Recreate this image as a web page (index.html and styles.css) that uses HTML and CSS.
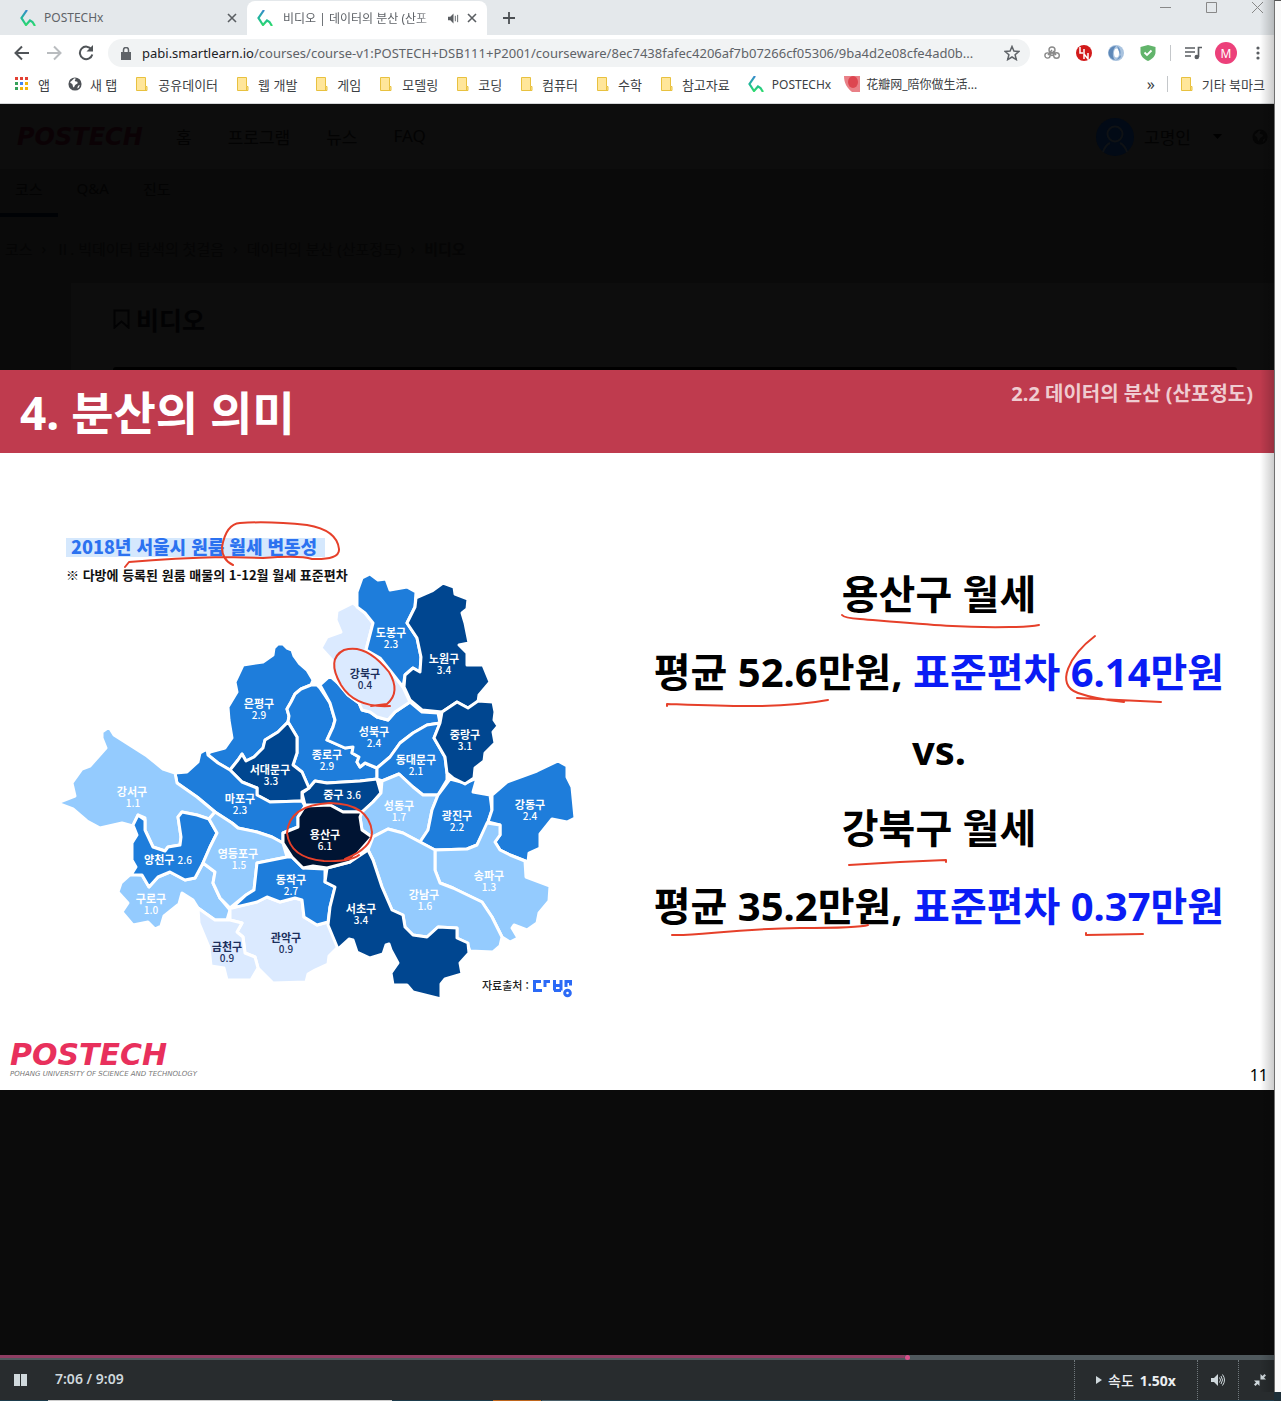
FILE: index.html
```html
<!DOCTYPE html>
<html lang="ko">
<head>
<meta charset="utf-8">
<meta name="viewport" content="width=device-width, initial-scale=1">
<title>비디오 | 데이터의 분산 (산포정도)</title>
<link rel="stylesheet" href="styles.css">
</head>
<body>
<svg class="defs" width="0" height="0" aria-hidden="true">
  <defs>
    <linearGradient id="mark-fill" x1="0" y1="0" x2="0" y2="1">
      <stop offset="0" stop-color="#3a86cf"/><stop offset=".5" stop-color="#1fb89a"/><stop offset="1" stop-color="#2fdc6a"/>
    </linearGradient>
    <symbol id="mark" viewBox="0 0 16 16"><path d="M7 0 1.500 8 6 15 10 10.500 12.500 12 15 16" fill="none" stroke="url(#mark-fill)" stroke-width="2.200"/></symbol>
    <symbol id="folder" viewBox="0 0 14 14"><path d="M1.500.500h9v9h1.500v4h-10.500z" fill="#ffe69a" stroke="#e8c13f"/><path d="M10.500 9.500v4" stroke="#e8c13f"/></symbol>
    <symbol id="close" viewBox="0 0 10 10"><path d="m1 1 8 8M9 1 1 9" stroke="#5a5e62" stroke-width="1.600"/></symbol>
    <symbol id="globe" viewBox="0 0 16 16"><circle cx="8" cy="8" r="7.500" fill="currentColor"/><path d="M8 1.500c2 1-1 2 0 3s3 0 3 2-2 1-3 3-1 3-2 2 0-3-2-4-2-2 0-3 2-3 4-3zM11.500 10l2-1-1 3-2 1z" fill="var(--globe-land)"/></symbol>
  </defs>
</svg>

<div class="desktop">
  <main class="window">
    <div class="tabs">
      <div class="tab">
        <svg class="icon16"><use href="#mark"/></svg>
        <span class="tab-title">POSTECHx</span>
        <button class="plain" aria-label="탭 닫기"><svg class="icon10"><use href="#close"/></svg></button>
      </div>
      <div class="tab active">
        <svg class="icon16"><use href="#mark"/></svg>
        <span class="tab-title fade">비디오 | 데이터의 분산 (산포</span>
        <svg class="speaker" width="11" height="11" viewBox="0 0 12 12"><path d="M0 4h2.500l3.500-3.500v11L2.500 8H0z" fill="#5a5e62"/><path d="M8 3v6M10.500 2v8" stroke="#5a5e62" fill="none"/></svg>
        <button class="plain" aria-label="탭 닫기"><svg class="icon10"><use href="#close"/></svg></button>
      </div>
      <button class="plain new-tab" aria-label="새 탭"><svg width="12" height="12" viewBox="0 0 12 12"><path d="M6 0v12M0 6h12" stroke="#4b4f53" stroke-width="1.800"/></svg></button>
      <div class="window-buttons">
        <button class="plain" aria-label="최소화"><svg width="11" height="11"><path d="M0 5.500h11" stroke="#888"/></svg></button>
        <button class="plain" aria-label="최대화"><svg width="11" height="11"><path d="M.500.500h10v10H.500z" fill="none" stroke="#888"/></svg></button>
        <button class="plain" aria-label="닫기"><svg width="11" height="11"><path d="m0 0 11 11M11 0 0 11" stroke="#888"/></svg></button>
      </div>
    </div>

    <div class="toolbar">
      <div class="nav-buttons">
        <button class="plain" aria-label="뒤로"><svg width="16" height="16" viewBox="0 0 16 16"><path d="M15 8H2M8 1.500 1.500 8 8 14.500" fill="none" stroke="#505458" stroke-width="2"/></svg></button>
        <button class="plain" aria-label="앞으로"><svg width="16" height="16" viewBox="0 0 16 16"><path d="M1 8h13M8 1.500 14.500 8 8 14.500" fill="none" stroke="#b9bcbf" stroke-width="2"/></svg></button>
        <button class="plain" aria-label="새로고침"><svg width="16" height="16" viewBox="0 0 16 16"><path d="M13.500 4.500A6.300 6.300 0 1 0 14.300 9.500" fill="none" stroke="#505458" stroke-width="2"/><path d="M15 0v6.500H8.500z" fill="#505458"/></svg></button>
      </div>
      <div class="address">
        <svg width="10" height="13" viewBox="0 0 10 13"><path d="M0 5h10v8H0z" fill="#5f6368"/><path d="M2.500 5V3a2.500 2.500 0 0 1 5 0v2" fill="none" stroke="#5f6368" stroke-width="1.500"/></svg>
        <span class="url"><b>pabi.smartlearn.io</b>/courses/course-v1:POSTECH+DSB111+P2001/courseware/8ec7438fafec4206af7b07266cf05306/9ba4d2e08cfe4ad0b...</span>
        <svg width="16" height="16" viewBox="0 0 16 16"><path d="m8 1.500 1.900 4.600 5 .400-3.800 3.200 1.200 4.900L8 12l-4.300 2.600 1.200-4.900L1.100 6.500l5-.400z" fill="none" stroke="#5f6368" stroke-width="1.500"/></svg>
      </div>
      <div class="extensions">
        <svg width="16" height="16" viewBox="0 0 16 16" fill="none" stroke="#8a8a8a" stroke-width="1.400"><circle cx="8" cy="5" r="3"/><circle cx="3.500" cy="10.500" r="2.600"/><circle cx="12.500" cy="10.500" r="2.800"/><path d="M8 5 4 10M9 6l3 4"/><circle cx="8" cy="9" r="1.500"/></svg>
        <svg width="16" height="16" viewBox="0 0 16 16"><circle cx="8" cy="8" r="8" fill="#d21b1b"/><path d="M4 2v6h3M8 4v5M8 9v5M8 9l4 5V8" fill="none" stroke="#fff" stroke-width="1.500"/></svg>
        <svg width="16" height="16" viewBox="0 0 16 16"><circle cx="8" cy="8" r="8" fill="#a9c3df"/><path d="M8 1a7 7 0 0 0-1 14c-3-3-3-10 1-14z" fill="#5e88b8"/><ellipse cx="8.500" cy="8" rx="2.500" ry="4.500" fill="#fff"/><path d="M9 1c5 3 5 10-1 14a7 7 0 0 0 5-3z" fill="#6f97c4"/></svg>
        <svg width="16" height="16" viewBox="0 0 16 16"><path d="M8 0 15.500 2v5c0 4-3 7-7.500 9C3.500 14 .500 11 .500 7V2z" fill="#62b46b"/><path d="m4.500 7.500 2.500 2.500 4.500-4.500" fill="none" stroke="#fff" stroke-width="1.800"/></svg>
        <span class="rule"></span>
        <svg width="18" height="14" viewBox="0 0 18 14"><path d="M1 2h10M1 6h10M1 10h6M14.500 11V1.500H18" fill="none" stroke="#5a5e62" stroke-width="1.700"/><circle cx="12.800" cy="11" r="2.300" fill="#5a5e62"/></svg>
        <button class="avatar" aria-label="프로필">M</button>
        <button class="plain" aria-label="메뉴"><svg width="4" height="14"><g fill="#5a5e62"><circle cx="2" cy="2" r="1.600"/><circle cx="2" cy="7" r="1.600"/><circle cx="2" cy="12" r="1.600"/></g></svg></button>
      </div>
    </div>

    <nav class="bookmarks">
      <a href="#"><svg width="14" height="14"><g><path d="M0 0h3v3H0zM5 0h3v3H5zM10 0h3v3h-3z" fill="#e34133"/><path d="M0 5h3v3H0z" fill="#36a15a"/><path d="M5 5h3v3H5z" fill="#4285f4"/><path d="M10 5h3v3h-3z" fill="#f3b50a"/><path d="M0 10h3v3H0z" fill="#36a15a"/><path d="M5 10h3v3H5zM10 10h3v3h-3z" fill="#f3b50a"/></g></svg>앱</a>
      <a href="#"><svg class="icon14 globe"><use href="#globe"/></svg>새 탭</a>
      <a href="#"><svg class="icon14"><use href="#folder"/></svg>공유데이터</a>
      <a href="#"><svg class="icon14"><use href="#folder"/></svg>웹 개발</a>
      <a href="#"><svg class="icon14"><use href="#folder"/></svg>게임</a>
      <a href="#"><svg class="icon14"><use href="#folder"/></svg>모델링</a>
      <a href="#"><svg class="icon14"><use href="#folder"/></svg>코딩</a>
      <a href="#"><svg class="icon14"><use href="#folder"/></svg>컴퓨터</a>
      <a href="#"><svg class="icon14"><use href="#folder"/></svg>수학</a>
      <a href="#"><svg class="icon14"><use href="#folder"/></svg>참고자료</a>
      <a href="#"><svg class="icon16"><use href="#mark"/></svg>POSTECHx</a>
      <a href="#" lang="zh"><svg width="16" height="16"><path d="M0 0h16v16H8C3 12 0 7 0 0z" fill="#e98087"/><ellipse cx="9" cy="6" rx="5" ry="6" fill="#dd4650"/></svg>花瓣网_陪你做生活...</a>
      <span class="more">»</span>
      <span class="rule"></span>
      <a href="#"><svg class="icon14"><use href="#folder"/></svg>기타 북마크</a>
    </nav>

    <div class="page">
      <header class="site-header">
        <a class="site-logo" href="#">POSTECH</a>
        <nav class="site-nav"><a href="#">홈</a><a href="#">프로그램</a><a href="#">뉴스</a><a href="#">FAQ</a></nav>
        <div class="user">
          <svg width="38" height="38" viewBox="0 0 38 38"><circle cx="19" cy="19" r="19" fill="#020a16"/><circle cx="19" cy="16" r="7.500" fill="none" stroke="#0f1215" stroke-width="2"/><path d="M7 34c2-6 5-8 7-9M31 34c-2-6-5-8-7-9" stroke="#0f1215" stroke-width="2" fill="none"/></svg>
          <span>고명인</span>
          <svg class="caret" width="9" height="5"><path d="M0 0h9L4.500 5z" fill="#000"/></svg>
          <svg class="icon16 dim-globe"><use href="#globe"/></svg>
        </div>
      </header>
      <nav class="course-tabs"><a class="current" href="#">코스</a><a href="#">Q&amp;A</a><a href="#">진도</a></nav>
      <nav class="crumbs"><a href="#">코스</a><i>›</i><a href="#">Ⅱ. 빅데이터 탐색의 첫걸음</a><i>›</i><a href="#">데이터의 분산 (산포정도)</a><i>›</i><b>비디오</b></nav>
      <section class="unit">
        <h1><svg width="17" height="20"><path d="M1.500 1.500h14v17l-7-6-7 6z" fill="none" stroke="#020203" stroke-width="2"/></svg>비디오</h1>
        <div class="unit-bar"></div>
      </section>
    </div>

    <article class="slide">
      <header class="slide-header"><h2>4. 분산의 의미</h2><p>2.2 데이터의 분산 (산포정도)</p></header>
      <div class="slide-body">
        <svg class="map" viewBox="50 500 540 520" role="img" aria-label="2018년 서울시 원룸 월세 변동성">
          <path d="M66 538H325V557H66z" fill="#d5e8fd"/>
          <text class="map-title" x="71" y="554">2018년 서울시 원룸 월세 변동성</text>
          <text class="map-note" x="66" y="580">※ 다방에 등록된 원룸 매물의 1-12월 월세 표준편차</text>
          <g class="areas">
            <path class="c3" d="M274 648 278 644 283 644 287 648 292 650 294 656 299 663 307 670 313 680 311 685 301 689 295 694 291 702 287 709 289 716 288 722 278 732 265 740 263 748 254 757 246 761 242 754 238 760 230 770 218 763 208 755 210 752 225 748 232 738 229 720 228 707 237 692 235 682 243 665 263 662 273 655z"/>
            <path class="c3" d="M317 685 311 685 301 689 295 694 291 702 287 709 289 716 288 722 297 737 297 753 293 765 302 772 309 788 315 781 327 783 360 781 377 779 377 768 365 763 360 767 357 762 359 757 352 753 353 747 345 748 327 740 333 727 335 720 330 703 320 688z"/>
            <path class="c3" d="M320 685 330 676 338 683 348 695 359 703 362 710 370 712 377 717 388 720 395 712 410 702 422 712 438 713 440 723 427 725 413 733 400 743 390 757 377 768 365 763 360 767 357 762 359 757 352 753 353 747 345 748 327 740 333 727 335 720 330 703z"/>
            <path class="c3" d="M440 723 427 725 413 733 400 743 390 757 377 768 377 779 382 781 399 774 413 787 423 795 438 795 447 780 447 773 445 757 434 738z"/>
            <path class="c4" d="M309 788 315 781 327 783 360 781 377 779 381 793 373 802 362 812 343 812 330 805 305 805 302 793z"/>
            <path class="c4" d="M288 722 297 737 297 753 293 765 302 772 309 788 302 792 302 801 270 802 257 795 257 788 242 782 230 770 238 760 242 754 246 761 254 757 263 748 265 740 278 732z"/>
            <path class="c3" d="M207 749 208 755 218 763 230 770 242 782 257 788 257 795 270 802 302 801 305 806 298 817 298 827 283 833 283 843 272 837 257 832 238 828 232 823 215 812 197 797 177 783 175 773 187 772 198 762 200 753z"/>
            <path class="c2" d="M102 732 109 727 114 735 147 756 163 769 175 773 177 783 197 797 215 812 209 819 197 815 182 812 178 817 181 837 180 845 168 847 165 851 153 847 145 830 145 818 138 815 133 826 122 823 100 828 87 821 73 809 57 803 75 796 72 783 82 769 90 766 106 748 102 738z"/>
            <path class="c2" d="M131 874 142 875 149 887 158 877 170 872 185 880 195 878 203 863 215 872 213 883 220 898 230 910 227 920 215 920 205 913 198 908 193 900 182 893 179 904 164 916 161 926 155 929 148 922 133 925 122 912 128 903 118 892 121 883z"/>
            <path class="c3" d="M138 815 145 820 145 830 153 847 165 851 168 847 180 845 181 837 178 817 182 812 197 815 209 819 217 833 210 847 203 863 195 878 185 880 170 872 158 877 149 887 142 875 131 875 136 867 132 860 132 843 137 835 133 825z"/>
            <path class="c2" d="M215 812 232 823 238 828 257 832 272 837 283 843 287 857 257 863 254 890 246 895 230 908 220 898 213 883 215 872 203 863 210 847 217 833 209 819z"/>
            <path class="c1" d="M230 908 257 902 267 897 280 902 295 898 302 900 304 917 317 925 328 922 338 947 329 956 328 964 315 970 308 974 306 982 273 983 258 968 255 957 245 953 243 937 237 932 242 923 230 920z"/>
            <path class="c1" d="M198 908 205 913 215 920 230 920 242 923 237 932 243 937 245 953 255 957 258 968 251 980 227 980 224 968 211 966 209 947 199 923z"/>
            <path class="c3" d="M287 857 257 863 254 890 246 895 232 908 257 902 267 897 280 902 295 898 302 900 304 917 317 925 328 922 330 907 335 887 325 882 325 869 303 868 292 857z"/>
            <path class="c2" d="M399 774 382 781 381 793 373 802 362 812 360 817 362 830 372 837 388 829 403 833 420 842 428 830 432 810 438 795 423 795 413 787z"/>
            <path class="c3" d="M450 779 465 783 477 778 473 792 490 795 492 810 487 825 477 845 467 849 435 850 420 842 428 830 432 810 438 795z"/>
            <path class="c3" d="M492 795 507 782 537 771 558 761 567 766 567 777 572 787 575 818 567 822 552 819 540 834 540 848 529 853 528 862 510 855 500 850 495 842 500 835 500 825 488 822 492 810z"/>
            <path class="c2" d="M487 823 500 825 500 835 495 842 500 850 510 855 525 861 526 877 550 886 549 901 539 913 537 923 527 930 514 925 512 928 518 938 510 942 502 937 492 917 482 902 453 888 440 883 435 870 435 850 467 849 477 845z"/>
            <path class="c2" d="M388 829 403 833 420 842 435 850 435 870 440 883 453 888 482 902 492 917 502 937 500 946 493 952 470 951 467 943 457 938 457 928 438 927 427 937 413 935 405 927 403 915 392 910 382 887 373 860 368 850 373 837z"/>
            <path class="c4" d="M368 850 373 860 382 887 392 910 403 915 405 927 413 935 427 937 438 927 457 928 457 938 468 943 469 953 460 963 462 974 445 979 441 984 441 999 413 992 407 985 393 985 391 973 398 963 391 950 389 944 386 945 383 954 370 958 357 952 353 940 349 939 338 949 328 925 330 907 335 887 325 882 327 868 350 862z"/>
            <path class="c5" d="M305 806 330 805 343 812 362 812 360 817 362 830 372 837 358 853 350 862 327 868 313 866 303 868 292 857 283 843 283 833 298 827 298 817z"/>
            <path class="c1" d="M337 611 353 603 358 607 365 613 373 623 366 650 380 658 392 673 403 687 410 702 395 712 388 720 377 717 370 712 362 710 359 703 348 695 338 683 332 672 332 660 321 648 327 637 341 632 336 620z"/>
            <path class="c3" d="M357 592 362 578 370 574 378 580 386 579 390 590 407 587 416 592 415 607 407 623 417 638 421 657 420 672 413 668 405 675 403 687 392 673 380 658 366 650 373 623 365 613 357 607z"/>
            <path class="c4" d="M416 598 432 591 443 583 454 587 455 594 468 599 467 609 462 613 465 623 469 643 459 645 467 653 467 665 483 665 490 682 479 695 478 702 468 708 457 702 442 712 422 710 410 700 404 687 405 675 413 668 420 672 421 657 417 638 407 623 415 607z"/>
            <path class="c4" d="M442 712 457 702 468 708 478 701 493 702 495 712 494 720 498 726 493 732 495 743 485 753 484 761 475 768 474 778 465 784 453 778 447 773 445 757 434 738 440 723z"/>
          </g>
          <g class="labels">
            <text x="391" y="637">도봉구<tspan class="n" x="391" dy="11">2.3</tspan></text>
            <text x="444" y="663">노원구<tspan class="n" x="444" dy="11">3.4</tspan></text>
            <text x="259" y="708">은평구<tspan class="n" x="259" dy="11">2.9</tspan></text>
            <text x="374" y="736">성북구<tspan class="n" x="374" dy="11">2.4</tspan></text>
            <text x="465" y="739">중랑구<tspan class="n" x="465" dy="11">3.1</tspan></text>
            <text x="327" y="759">종로구<tspan class="n" x="327" dy="11">2.9</tspan></text>
            <text x="416" y="764">동대문구<tspan class="n" x="416" dy="11">2.1</tspan></text>
            <text x="270" y="774">서대문구<tspan class="n" x="271" dy="11">3.3</tspan></text>
            <text x="132" y="796">강서구<tspan class="n" x="133" dy="11">1.1</tspan></text>
            <text x="240" y="803">마포구<tspan class="n" x="240" dy="11">2.3</tspan></text>
            <text x="342" y="799">중구 <tspan class="n">3.6</tspan></text>
            <text x="399" y="810">성동구<tspan class="n" x="399" dy="11">1.7</tspan></text>
            <text x="457" y="820">광진구<tspan class="n" x="457" dy="11">2.2</tspan></text>
            <text x="530" y="809">강동구<tspan class="n" x="530" dy="11">2.4</tspan></text>
            <text x="325" y="839">용산구<tspan class="n" x="325" dy="11">6.1</tspan></text>
            <text x="168" y="864">양천구 <tspan class="n">2.6</tspan></text>
            <text x="238" y="858">영등포구<tspan class="n" x="239" dy="11">1.5</tspan></text>
            <text x="151" y="903">구로구<tspan class="n" x="151" dy="11">1.0</tspan></text>
            <text x="291" y="884">동작구<tspan class="n" x="291" dy="11">2.7</tspan></text>
            <text x="424" y="899">강남구<tspan class="n" x="425" dy="11">1.6</tspan></text>
            <text x="489" y="880">송파구<tspan class="n" x="489" dy="11">1.3</tspan></text>
            <text x="361" y="913">서초구<tspan class="n" x="361" dy="11">3.4</tspan></text>
            <g class="on-pale">
              <text x="365" y="678">강북구<tspan class="n" x="365" dy="11">0.4</tspan></text>
              <text x="227" y="951">금천구<tspan class="n" x="227" dy="11">0.9</tspan></text>
              <text x="286" y="942">관악구<tspan class="n" x="286" dy="11">0.9</tspan></text>
            </g>
          </g>
          <text class="source" x="482" y="990">자료출처 :</text>
          <g fill="none" stroke="#2b6af6" stroke-width="3"><path d="M541 981.500h-6.500v9h7.500M545 987v-5.500h5M554.500 980v10.500M561 980v10.500M554 985.500h7M554 990.500h7M566 987v-5.500h4.500v4"/><circle cx="567.500" cy="993" r="2.800"/></g>
        </svg>
        <div class="facts">
          <p>용산구 월세</p>
          <p>평균 52.6만원, <em>표준편차 6.14만원</em></p>
          <p>vs.</p>
          <p>강북구 월세</p>
          <p>평균 35.2만원, <em>표준편차 0.37만원</em></p>
        </div>
      </div>
      <footer class="slide-footer">
        <div class="slide-logo"><strong>POSTECH</strong><small>POHANG UNIVERSITY OF SCIENCE AND TECHNOLOGY</small></div>
        <span>11</span>
      </footer>
      <svg class="ink" viewBox="0 370 1274 720" aria-hidden="true">
        <path d="M125 567 129 562Q175 558 223 557L263 558Q300 555 312 559Q340 560 339 549Q337 530 307 525Q270 521 240 523Q226 524 222 547Q222 560 233 565"/>
        <path d="M390 706Q355 708 341 685Q326 659 344 650Q366 643 389 672Q401 692 387 704L371 706"/>
        <path d="M345 859Q372 848 372 832Q369 804 330 803Q289 805 287 833Q290 858 324 861Q350 862 359 855"/>
        <path d="M842 615Q844 618 860 619C920 624 960 628 1010 627Q1030 627 1039 625"/>
        <path d="M667 706V704C720 706 780 709 828 700"/>
        <path d="M1095 636C1070 655 1054 685 1078 693Q1095 699 1124 702M1077 698Q1120 700 1161 702"/>
        <path d="M849 865 900 862 946 860V862"/>
        <path d="M672 935C700 936 730 929 800 928Q860 928 868 925"/>
        <path d="M1086 933V935L1143 934"/>
      </svg>
    </article>

    <div class="player-space"></div>

    <div class="player">
      <input class="seek" type="range" min="0" max="1000" value="713" aria-label="재생 위치">
      <div class="controls">
        <button class="plain play" aria-label="일시정지"><svg width="13" height="12"><path d="M0 0h6v12H0zM7 0h6v12H7z" fill="#cfd8dc"/></svg></button>
        <span class="time">7:06 / 9:09</span>
        <button class="speed"><svg width="6" height="8"><path d="M0 0 6 4 0 8z" fill="#cfd8dc"/></svg><span>속도</span><b>1.50x</b></button>
        <button class="volume" aria-label="음량"><svg width="14" height="12" viewBox="0 0 14 12"><path d="M0 4h3l4-4v12L3 8H0z" fill="#cfd8dc"/><path d="M8.500 3.500q2 2.500 0 5M10 2q3 4 0 8M11.500.500q4 5.500 0 11" fill="none" stroke="#cfd8dc"/></svg></button>
        <button class="shrink" aria-label="전체 화면 끄기"><svg width="12" height="12" viewBox="0 0 12 12"><path d="M0 6.500h5.500V12l-2-2L1.500 12 0 10.500l2-2zM12 5.500H6.500V0l2 2L10.500 0 12 1.500l-2 2z" fill="#cfd8dc"/></svg></button>
      </div>
    </div>
    <div class="taskbar"></div>
  </main>
  <aside class="neighbor"></aside>
</div>
</body>
</html>
```
FILE: styles.css
```css
* { box-sizing: border-box; }

body {
  margin: 0;
  background: #1e2f38;
  color: #3c4043;
  font-family: "Noto Sans", "Noto Sans CJK KR", sans-serif;
}

h1, h2, p { margin: 0; }
a { color: inherit; text-decoration: none; }
svg { display: block; flex: none; }
.defs { position: absolute; }
button { font: inherit; color: inherit; }

.plain {
  display: flex;
  padding: 0;
  border: 0;
  background: none;
}

.icon10 { width: 10px; height: 10px; }
.icon14 { width: 14px; height: 14px; }
.icon16 { width: 16px; height: 16px; }
.globe { color: #4d5156; --globe-land: #fff; }
.rule { width: 1px; height: 16px; background: #c4c7ca; }

.desktop { display: flex; min-height: 100vh; }

.window {
  flex: 1;
  min-width: 0;
  display: flex;
  flex-direction: column;
  position: relative;
}

.window::after {
  content: "";
  position: absolute;
  inset: 0 0 9px auto;
  width: 14px;
  background: linear-gradient(to right, transparent, rgba(0, 0, 0, .2));
  pointer-events: none;
}

.neighbor {
  width: 7px;
  margin-bottom: 9px;
  border-left: 1px solid #707070;
  border-top: 1px solid #555;
  background: #fafafa;
}

/* Browser frame */
.tabs {
  display: flex;
  height: 35px;
  background: #e4e8eb;
  font-size: 12px;
}

.tab {
  display: flex;
  align-items: center;
  gap: 8px;
  width: 240px;
  padding: 0 10px;
  color: #5f6368;
}

.tab:first-child { width: 247px; padding-left: 20px; }
.tab.active { margin-top: 1px; border-radius: 8px 8px 0 0; background: #fff; }
.tab-title { flex: 1; white-space: nowrap; }
.tab.active .tab-title { margin-left: 2px; }
.fade { mask-image: linear-gradient(to right, #000 85%, transparent); }
.new-tab { align-items: center; margin-left: 16px; }

.window-buttons {
  display: flex;
  align-items: flex-start;
  gap: 35px;
  margin-left: auto;
  padding: 2px 11px 0 0;
}

.toolbar {
  display: flex;
  align-items: center;
  height: 36px;
  background: #fff;
}

.nav-buttons { display: flex; gap: 16px; padding: 0 14px; }

.address {
  flex: 1;
  min-width: 0;
  display: flex;
  align-items: center;
  gap: 11px;
  height: 28px;
  padding: 0 10px 0 13px;
  border-radius: 14px;
  background: #f1f3f4;
}

.url {
  flex: 1;
  overflow: hidden;
  color: #5f6368;
  font-size: 13px;
  white-space: nowrap;
}

.url b { color: #202124; font-weight: 400; }

.extensions {
  display: flex;
  align-items: center;
  gap: 13px;
  padding: 0 14px;
}

.extensions > svg { margin-right: 3px; }
.extensions .rule { margin-left: -2px; }

.avatar {
  width: 22px;
  height: 22px;
  margin: 0 6px 0 -3px;
  padding: 0;
  border: 0;
  border-radius: 50%;
  background: #ec407a;
  color: #fff;
  font-size: 12px;
}

.bookmarks {
  display: flex;
  align-items: center;
  gap: 18px;
  height: 33px;
  padding: 0 9px 6px 15px;
  border-bottom: 1px solid #d5d7d9;
  background: #fff;
  font-size: 13px;
  white-space: nowrap;
}

.bookmarks a { display: flex; align-items: center; gap: 8px; }
.bookmarks a:nth-child(1), .bookmarks a:nth-child(3), .bookmarks a:nth-child(6) { gap: 9px; }
.bookmarks a:nth-child(11), .bookmarks a:nth-child(12) { font-size: 12px; }
.bookmarks a:nth-child(12) { gap: 6px; margin-left: -5px; }
.bookmarks [lang="zh"] { font-family: "Noto Sans", "Noto Sans CJK SC", sans-serif; }
.more { margin-left: auto; font-size: 16px; }
.bookmarks .rule { margin: 0 -6px; }

/* Course page dimmed behind the full-window player */
.page { background: #0a0a0a; color: #030303; }

.site-header {
  display: flex;
  align-items: center;
  height: 65px;
  padding: 0 6px 0 17px;
  background: #0d0d0d;
  font-size: 17px;
}

.site-logo {
  width: 159px;
  color: #0b0205;
  font: italic bold 24px "DejaVu Sans", sans-serif;
}

.site-nav { display: flex; gap: 36px; }

.user {
  display: flex;
  align-items: center;
  gap: 10px;
  margin-left: auto;
}

.user .caret { margin: 0 20px 0 12px; }
.dim-globe { color: #050505; --globe-land: #0d0d0d; }

.course-tabs { display: flex; gap: 4px; height: 48px; font-size: 15px; }
.course-tabs a { padding: 9px 15px 0; }
.course-tabs .current { border-bottom: 4px solid #000205; }

.crumbs {
  display: flex;
  align-items: center;
  gap: 9px;
  height: 66px;
  padding: 0 0 4px 5px;
  color: #050505;
  font-size: 15px;
}

.crumbs i { font-style: normal; }

.unit {
  margin-left: 71px;
  padding: 18px 37px 0 42px;
  background: #0d0d0d;
}

.unit h1 {
  display: flex;
  align-items: center;
  gap: 6px;
  height: 36px;
  color: #020203;
  font-size: 25px;
}

.unit-bar { height: 3px; margin-top: 30px; border-radius: 4px 4px 0 0; background: #000; }

/* Lecture slide */
.slide {
  position: relative;
  display: flex;
  flex-direction: column;
  aspect-ratio: 1274 / 720;
  background: #fff;
  color: #000;
}

.slide-header {
  display: flex;
  justify-content: space-between;
  height: 83px;
  padding: 8px 21px 0 20px;
  background: #bf3b4e;
  color: #fff;
  white-space: nowrap;
}

.slide-header h2 { font-size: 46px; line-height: 68px; }
.slide-header p { color: #efccd1; font-size: 20px; font-weight: 700; line-height: 32px; }

.slide-body {
  flex: 1;
  display: grid;
  grid-template-columns: 540fr 684fr;
  padding: 47px 0 0 50px;
}

.map { width: 100%; }
.map-title { fill: #2c72f0; font-size: 18px; font-weight: 900; }
.map-note { fill: #111; font-size: 13px; font-weight: 700; }
.source { fill: #222; font-size: 11px; font-weight: 500; }
.map-title, .map-note, .source, .labels { font-family: "Noto Sans CJK KR", sans-serif; }

.areas path { stroke: #fff; stroke-width: 3; stroke-linejoin: round; }
.c1 { fill: #dbeaff; }
.c2 { fill: #94cbfe; }
.c3 { fill: #1e7ddb; }
.c4 { fill: #004690; }
.c5 { fill: #001433; }

.labels { fill: #fff; font-size: 11px; font-weight: 700; text-anchor: middle; }
.labels .n { font-size: 10px; font-weight: 500; }
.on-pale { fill: #1c2f5c; }

.facts {
  padding: 55px 0 0 14px;
  font-size: 40px;
  font-weight: 700;
  line-height: 78px;
  text-align: center;
  white-space: nowrap;
}

.facts em { color: #0a1cf5; font-style: normal; }

.slide-footer {
  display: flex;
  justify-content: space-between;
  align-items: flex-end;
  height: 70px;
  padding: 0 6px 4px 10px;
  font-size: 16px;
}

.slide-logo { display: flex; flex-direction: column; padding-bottom: 8px; }
.slide-logo strong { color: #e8305c; font: italic bold 30px/30px "DejaVu Sans", sans-serif; }
.slide-logo small { color: #777; font: italic 7px/8px "DejaVu Sans", sans-serif; }

.ink {
  position: absolute;
  inset: 0;
  width: 100%;
  fill: none;
  stroke: #e6402a;
  stroke-width: 2;
  stroke-linecap: round;
  stroke-linejoin: round;
}

/* Player */
.player-space { flex: 1; min-height: 40px; background: #0b0b0b; }
.player { background: #282c2e; color: #cfd8dc; }

.seek {
  appearance: none;
  display: block;
  width: 100%;
  height: 5px;
  margin: 0;
  background:
    linear-gradient(#8e3e63, #8e3e63) 0 0 / 71% 3px no-repeat,
    #4f595d;
}

.seek::-webkit-slider-thumb {
  appearance: none;
  width: 5px;
  height: 5px;
  border-radius: 50%;
  background: #d9508b;
}

.controls {
  display: flex;
  align-items: center;
  height: 40px;
  font-size: 13px;
}

.play { padding: 0 14px; }
.time { margin-left: 14px; font-size: 14px; font-weight: 600; line-height: 20px; padding-bottom: 2px; }

.speed, .volume, .shrink {
  display: flex;
  align-items: center;
  justify-content: center;
  height: 40px;
  padding: 0;
  border: 0;
  border-left: 1px dotted #70787c;
  background: none;
}

.speed { gap: 6px; width: 123px; margin-left: auto; color: #eceff1; font-size: 14px; }
.speed span { font-weight: 500; }
.volume { width: 41px; }
.shrink { width: 36px; padding-left: 6px; }

.taskbar {
  height: 1px;
  background:
    linear-gradient(#ccc, #ccc) 48px 0 / 344px 1px no-repeat,
    linear-gradient(#c0661c, #c0661c) 493px 0 / 48px 1px no-repeat,
    linear-gradient(#4a5f68, #4a5f68) 542px 0 / 48px 1px no-repeat,
    #1d3c4c;
}
```
